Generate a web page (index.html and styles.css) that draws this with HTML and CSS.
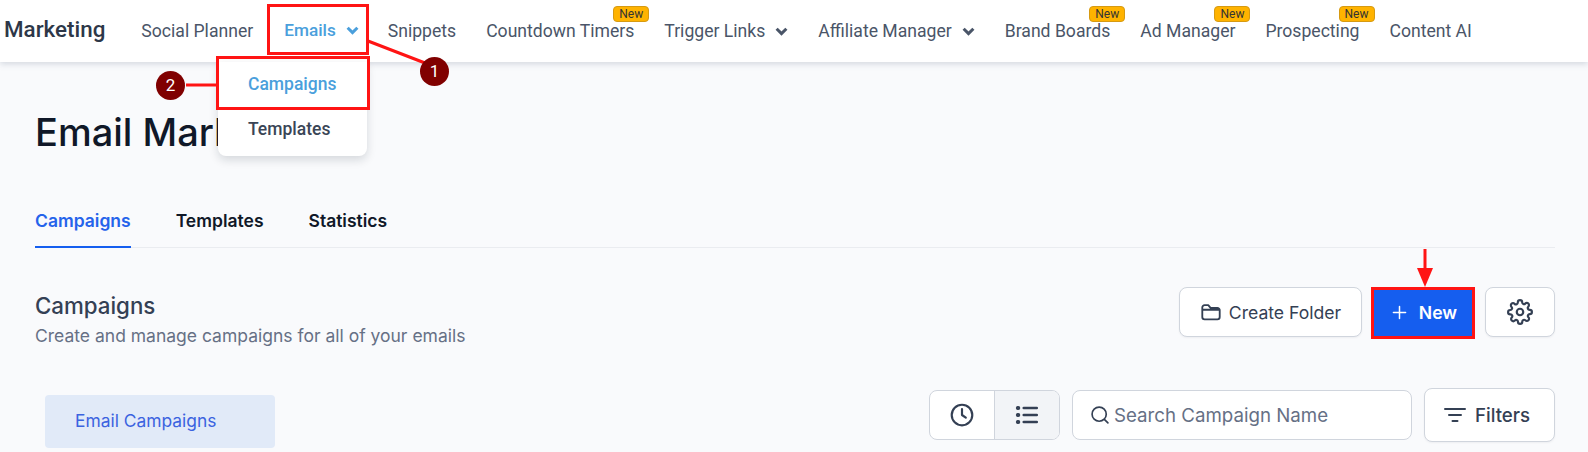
FILE: index.html
```html
<!DOCTYPE html>
<html lang="en">
<head>
  <meta charset="UTF-8" />
  <title>Email Marketing</title>
  <meta name="viewport" content="width=device-width, initial-scale=1.0" />
  <link rel="stylesheet" href="styles.css">
</head>
<body>
  <nav class="topnav">
    <span class="brand">Marketing</span>
    <a class="nav-item">Social Planner</a>
    <a class="nav-item active">Emails
      <svg class="chev" viewBox="0 0 12 8"><path d="M1.5 1.5 6 6l4.5-4.5"/></svg>
    </a>
    <a class="nav-item">Snippets</a>
    <a class="nav-item">Countdown Timers<span class="new">New</span></a>
    <a class="nav-item">Trigger Links
      <svg class="chev" viewBox="0 0 12 8"><path d="M1.5 1.5 6 6l4.5-4.5"/></svg>
    </a>
    <a class="nav-item">Affiliate Manager
      <svg class="chev" viewBox="0 0 12 8"><path d="M1.5 1.5 6 6l4.5-4.5"/></svg>
    </a>
    <a class="nav-item">Brand Boards<span class="new">New</span></a>
    <a class="nav-item">Ad Manager<span class="new">New</span></a>
    <a class="nav-item">Prospecting<span class="new">New</span></a>
    <a class="nav-item">Content AI</a>
  </nav>

  <main class="page">
    <h1>Email Marketing</h1>

    <div class="tabs">
      <a class="tab current">Campaigns</a>
      <a class="tab">Templates</a>
      <a class="tab">Statistics</a>
    </div>

    <section class="head-row">
      <div>
        <h2>Campaigns</h2>
        <p>Create and manage campaigns for all of your emails</p>
      </div>
      <div class="actions">
        <button class="btn folder">
          <svg class="icon" viewBox="0 0 24 24"><path d="M2.500 7A2.500 2.500 0 0 1 5 4.500h4l2.500 3H19A2.500 2.500 0 0 1 21.500 10v7.500A2.500 2.500 0 0 1 19 20H5a2.500 2.500 0 0 1-2.500-2.500z M2.500 9.500h19"/></svg>
          Create Folder
        </button>
        <button class="btn primary">
          <svg class="icon plus" viewBox="0 0 16 16"><path d="M8 1.500v13M1.500 8h13"/></svg>
          New
        </button>
        <button class="btn gear" aria-label="Settings">
          <svg class="icon big" viewBox="0 0 24 24"><circle cx="12" cy="12" r="3"/><path d="M19.400 15a1.650 1.650 0 0 0 .33 1.820l.06.06a2 2 0 1 1-2.830 2.830l-.06-.06a1.650 1.650 0 0 0-2.800 1.170V21a2 2 0 1 1-4 0v-.09a1.650 1.650 0 0 0-2.820-1.110l-.06.06a2 2 0 1 1-2.830-2.830l.06-.06a1.650 1.650 0 0 0-1.170-2.800H3a2 2 0 1 1 0-4h.09a1.650 1.650 0 0 0 1.110-2.820l-.06-.06a2 2 0 1 1 2.830-2.830l.06.06a1.650 1.650 0 0 0 1.820.33H9a1.650 1.650 0 0 0 1-1.510V3a2 2 0 1 1 4 0v.09a1.650 1.650 0 0 0 2.800 1.170l.06-.06a2 2 0 1 1 2.830 2.830l-.06.06a1.650 1.650 0 0 0-.33 1.820V9a1.650 1.650 0 0 0 1.510 1H21a2 2 0 1 1 0 4h-.09a1.650 1.650 0 0 0-1.510 1z"/></svg>
        </button>
      </div>
    </section>

    <section class="list-row">
      <a class="folder-tab">Email Campaigns</a>
      <div class="tools">
        <div class="segment">
          <span class="seg">
            <svg class="icon big" viewBox="0 0 24 24"><circle cx="12" cy="12" r="9.500"/><path d="M12 6.500V12l3.500 2.500"/></svg>
          </span>
          <span class="seg on">
            <svg class="icon big" viewBox="0 0 24 24"><path d="M9 5.500h12M9 12h12M9 18.500h12"/><path class="dots" d="M3.500 5.500h.5M3.500 12h.5M3.500 18.500h.5"/></svg>
          </span>
        </div>
        <label class="search">
          <svg class="icon" viewBox="0 0 24 24"><circle cx="11" cy="11" r="8.500"/><path d="m17.500 17.500 4 4"/></svg>
          <input type="text" placeholder="Search Campaign Name">
        </label>
        <button class="btn filters">
          <svg class="icon wide" viewBox="0 0 24 24"><path d="M2 6h20M6 12h12M9.500 18h5"/></svg>
          Filters
        </button>
      </div>
    </section>
  </main>

  <!-- open dropdown -->
  <div class="menu">
    <a class="menu-item active">Campaigns</a>
    <a class="menu-item">Templates</a>
  </div>

  <!-- tutorial markup drawn over the screenshot -->
  <svg class="marks" width="1588" height="452" viewBox="0 0 1588 452">
    <rect x="268.500" y="5.500" width="99" height="48"/>
    <rect x="217.500" y="57.500" width="151" height="51"/>
    <rect x="1372.500" y="288.500" width="101" height="49"/>
    <path d="M368 41 425 63M186 85h31M1425 249v24"/>
    <path class="head" d="M1417 268h16l-8 19z"/>
  </svg>
  <span class="step one">1</span>
  <span class="step two">2</span>
</body>
</html>
```

FILE: styles.css
```css
* {
  box-sizing: border-box;
}

body {
  margin: 0;
  width: 1588px;
  height: 452px;
  overflow: hidden;
  position: relative;
  font-family: Inter, sans-serif;
  background-color: #f9fafc;
  color: #101828;
}

.topnav {
  display: flex;
  align-items: center;
  height: 62px;
  padding-left: 4px;
  background: #fff;
  box-shadow: 0 2px 6px rgba(100, 116, 139, 0.25);
  font-family: Roboto, sans-serif;
}

.brand {
  font-size: 22.400px;
  font-weight: 500;
  color: #2d3748;
  margin-right: 21px;
  margin-top: -4px;
}

.nav-item {
  position: relative;
  display: flex;
  align-items: center;
  padding: 0 15px;
  font-size: 17.600px;
  color: #4a5568;
}

.nav-item.active {
  color: #4a9fdc;
  font-weight: 500;
  font-size: 17.200px;
  margin-top: -2px;
  padding: 0 14px 0 16px;
}

.chev {
  width: 13px;
  height: 9px;
  margin-left: 10px;
  fill: none;
  stroke: currentColor;
  stroke-width: 2.800;
}

.new {
  position: absolute;
  top: -15px;
  right: 0;
  width: 36px;
  height: 16px;
  background: #ffb300;
  border: 1px solid #d69a12;
  border-radius: 4px;
  font-size: 12px;
  line-height: 14px;
  text-align: center;
  color: #333;
}

.page {
  padding: 0 33px 0 35px;
}

h1 {
  margin: 0;
  padding-top: 47px;
  font-size: 38px;
  line-height: 46px;
  font-weight: 500;
  color: #101828;
}

.tabs {
  display: flex;
  gap: 45px;
  margin-top: 43px;
  border-bottom: 1px solid #eaecf0;
  height: 50px;
}

.tab {
  font-size: 17.500px;
  font-weight: 600;
  line-height: 24px;
  padding-top: 11px;
  height: 50px;
  color: #101828;
}

.tab.current {
  color: #2563eb;
  border-bottom: 2px solid #155eef;
}

.head-row {
  display: flex;
  justify-content: space-between;
  margin-top: 39px;
}

h2 {
  margin: 5px 0 0;
  font-size: 22.300px;
  line-height: 28px;
  font-weight: 500;
  color: #344054;
}

.head-row p {
  margin: 4px 0 0;
  font-size: 17.500px;
  line-height: 24px;
  color: #667085;
}

.actions {
  display: flex;
  gap: 12px;
}

.btn {
  display: flex;
  align-items: center;
  justify-content: center;
  gap: 8px;
  height: 50px;
  background: #fff;
  border: 1px solid #d0d5dd;
  border-radius: 8px;
  font-family: Inter, sans-serif;
  font-size: 17.600px;
  font-weight: 500;
  color: #344054;
  box-shadow: 0 1px 2px rgba(16, 24, 40, 0.05);
}

.folder {
  width: 183px;
  gap: 7px;
  font-weight: 400;
}

.folder .icon {
  width: 22px;
  height: 22px;
}

.primary {
  width: 98px;
  background: #155eef;
  border-color: #155eef;
  border-radius: 0;
  color: #fff;
  font-weight: 600;
  gap: 12px;
  padding-left: 9px;
}

.gear {
  width: 70px;
  margin-left: 1px;
}

.icon {
  width: 20px;
  height: 20px;
  flex: none;
  fill: none;
  stroke: currentColor;
  stroke-width: 2;
  stroke-linecap: round;
  stroke-linejoin: round;
}

.icon.big {
  width: 26px;
  height: 26px;
}

.icon.plus {
  width: 15px;
  height: 15px;
  stroke-width: 1.600;
}

.seg.on .icon {
  stroke-width: 2.400;
}

.seg.on .dots {
  stroke-width: 3.600;
}

.list-row {
  display: flex;
  justify-content: space-between;
  align-items: flex-start;
  padding-left: 10px;
  margin-top: 40px;
}

.folder-tab {
  width: 230px;
  height: 53px;
  margin-top: 7px;
  padding-left: 30px;
  background: #e1eaf8;
  border-radius: 4px;
  font-size: 17.400px;
  line-height: 52px;
  color: #3b63e0;
}

.tools {
  display: flex;
  align-items: center;
  gap: 12px;
  height: 54px;
}

.segment {
  display: flex;
  height: 50px;
  width: 131px;
  background: #fff;
  border: 1px solid #d0d5dd;
  border-radius: 8px;
  overflow: hidden;
}

.seg {
  flex: 1;
  display: flex;
  align-items: center;
  justify-content: center;
  color: #344054;
}

.seg.on {
  flex: none;
  width: 65px;
  background: #f2f4f7;
  border-left: 1px solid #d0d5dd;
}

.search {
  display: flex;
  align-items: center;
  gap: 4px;
  width: 340px;
  height: 50px;
  padding-left: 17px;
  background: #fff;
  border: 1px solid #d0d5dd;
  border-radius: 8px;
  color: #344054;
}

.search input {
  flex: 1;
  min-width: 0;
  padding: 0;
  border: none;
  outline: none;
  background: none;
  font-family: Inter, sans-serif;
  font-size: 18.700px;
}

.search input::placeholder {
  color: #667085;
}

.filters {
  width: 131px;
  height: 54px;
  padding-right: 12px;
  font-size: 18.700px;
}

.icon.wide {
  width: 24px;
  height: 24px;
}

.menu {
  position: absolute;
  left: 218px;
  top: 62px;
  width: 149px;
  height: 94px;
  background: #fff;
  border-radius: 0 0 8px 8px;
  box-shadow: 0 4px 10px rgba(16, 24, 40, 0.15);
  font-family: Roboto, sans-serif;
  font-size: 17.500px;
  font-weight: 500;
  color: #3a4556;
}

.menu-item {
  display: block;
  height: 45px;
  line-height: 45px;
  padding-left: 30px;
}

.menu-item.active {
  color: #4a9fdc;
}

.marks {
  position: absolute;
  left: 0;
  top: 0;
  fill: none;
  stroke: #ff1414;
  stroke-width: 3;
}

.marks .head {
  fill: #ff1414;
  stroke: none;
}

.step {
  position: absolute;
  width: 29px;
  height: 29px;
  border-radius: 50%;
  background: #800000;
  color: #fff;
  font-family: Roboto, sans-serif;
  font-size: 17px;
  line-height: 29px;
  text-align: center;
}

.step.one {
  left: 420px;
  top: 57px;
}

.step.two {
  left: 156px;
  top: 71px;
}
```
